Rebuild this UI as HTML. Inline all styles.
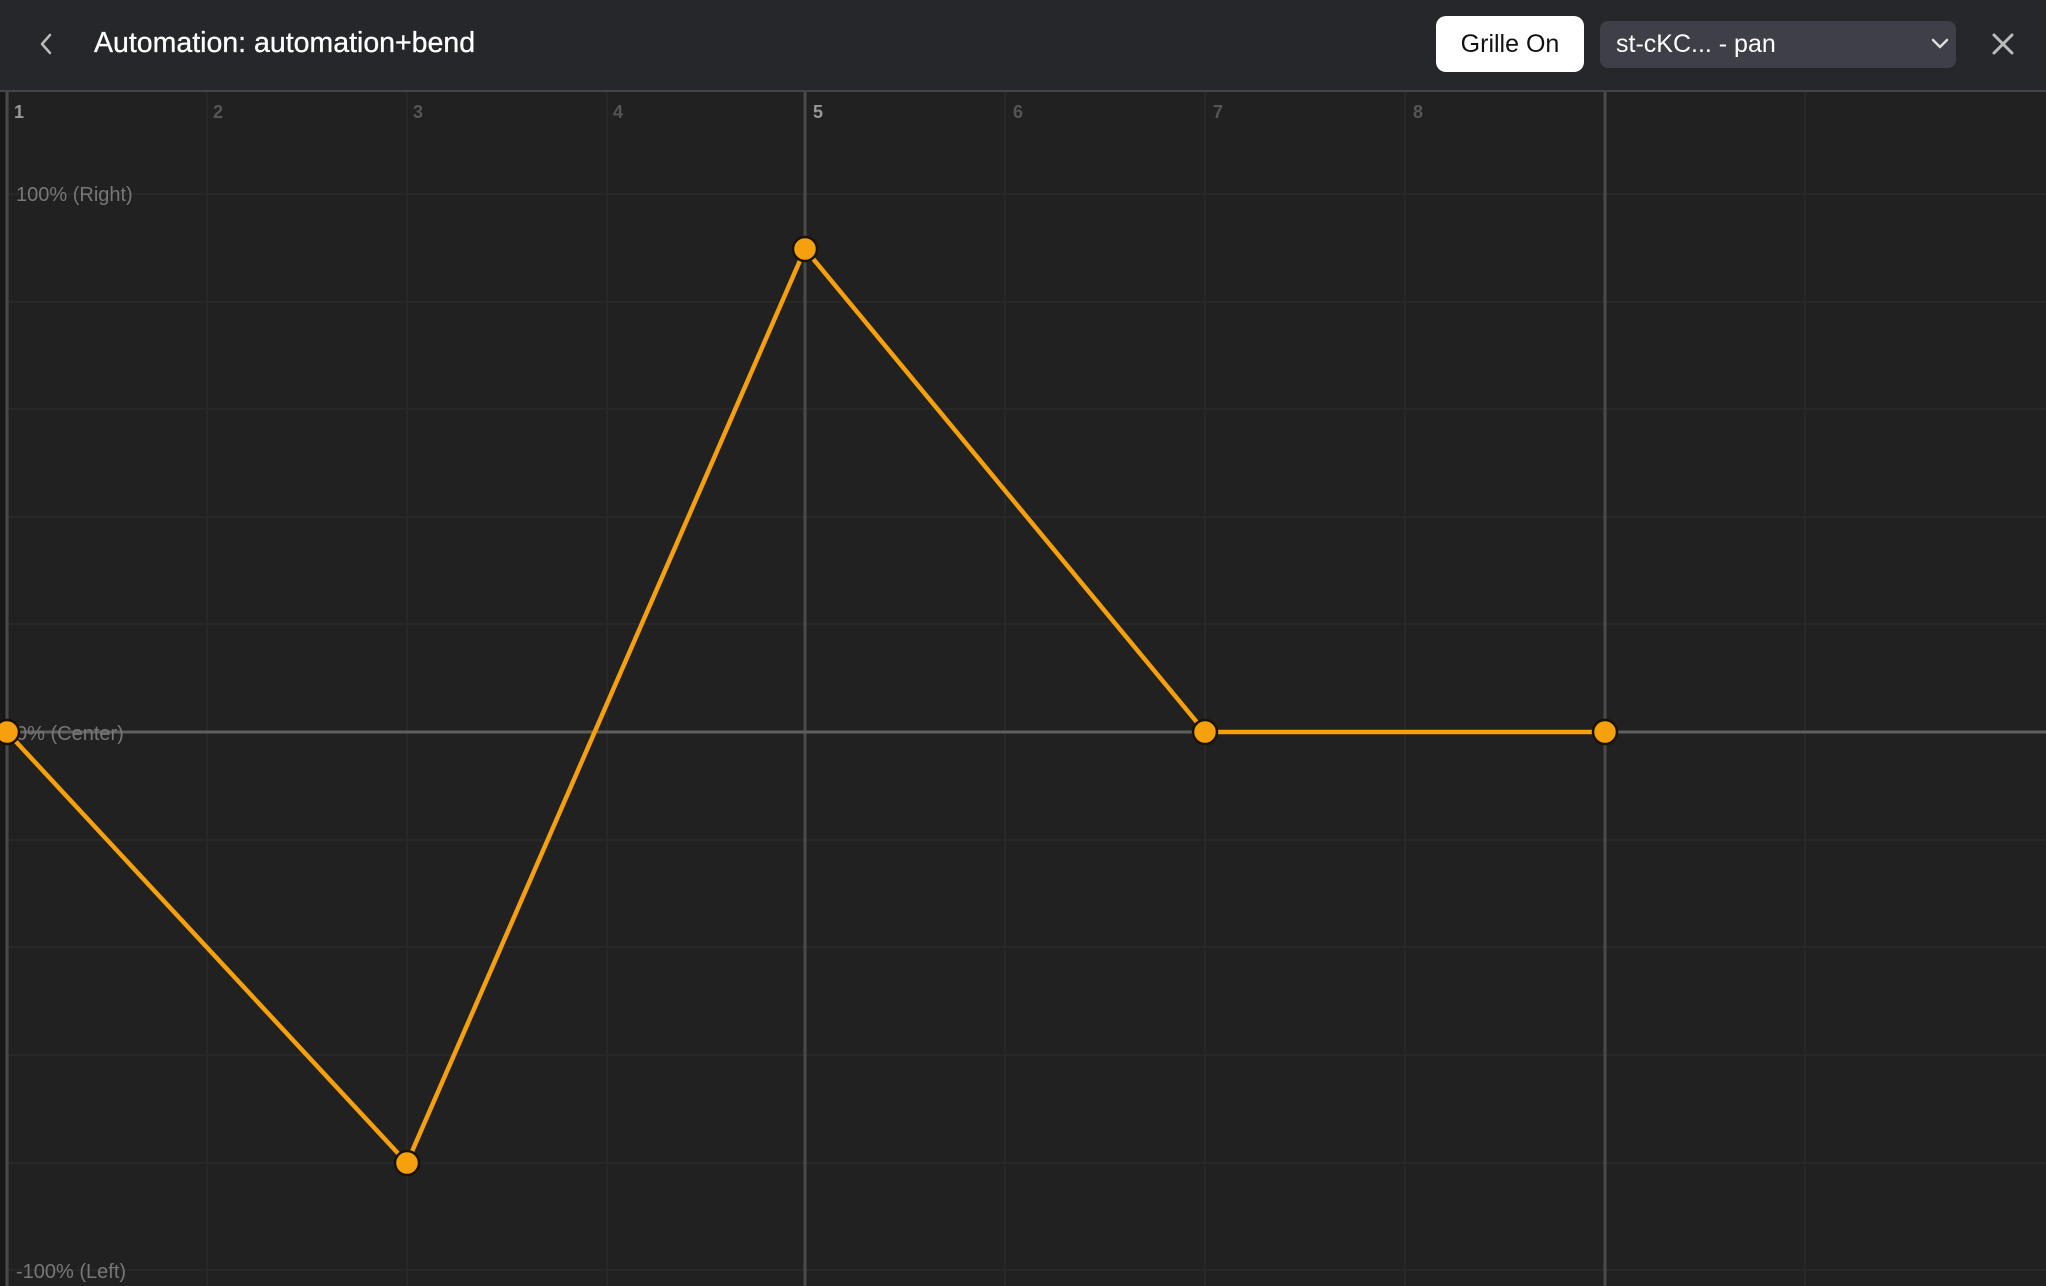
<!DOCTYPE html>
<html><head><meta charset="utf-8"><style>
html,body{margin:0;padding:0;width:2046px;height:1286px;overflow:hidden;background:#212121;font-family:"Liberation Sans",sans-serif}
.hdr{position:absolute;left:0;top:0;width:2046px;height:92px;background:#26272a;border-bottom:2px solid #444;box-sizing:border-box}
.title{position:absolute;left:94px;top:25px;font-size:28.5px;color:#fff;line-height:36px;font-weight:normal;-webkit-text-stroke:0.3px #fff}
.btn{position:absolute;left:1436px;top:16px;width:148px;height:56px;background:#fff;border-radius:10px;color:#111;font-size:25px;line-height:56px;text-align:center}
.sel{position:absolute;left:1600px;top:21px;width:356px;height:47px;background:#3e3f47;border-radius:8px;color:#fff;font-size:25px;line-height:47px;padding-left:16px;box-sizing:border-box}
.icons{position:absolute;left:0;top:0;z-index:5}
</style></head><body>
<svg width="2046" height="1286" style="position:absolute;left:0;top:0" font-family="Liberation Sans, sans-serif">
<rect x="0" y="92" width="6" height="1194" fill="#181818"/>
<g stroke="#282828" stroke-width="2">
<line x1="207" y1="92" x2="207" y2="1286"/><line x1="407" y1="92" x2="407" y2="1286"/><line x1="607" y1="92" x2="607" y2="1286"/>
<line x1="1005" y1="92" x2="1005" y2="1286"/><line x1="1205" y1="92" x2="1205" y2="1286"/><line x1="1405" y1="92" x2="1405" y2="1286"/>
<line x1="1805" y1="92" x2="1805" y2="1286"/>
<line x1="6" y1="194" x2="2046" y2="194"/><line x1="6" y1="302" x2="2046" y2="302"/><line x1="6" y1="409" x2="2046" y2="409"/><line x1="6" y1="517" x2="2046" y2="517"/><line x1="6" y1="624" x2="2046" y2="624"/>
<line x1="6" y1="840" x2="2046" y2="840"/><line x1="6" y1="947" x2="2046" y2="947"/><line x1="6" y1="1055" x2="2046" y2="1055"/><line x1="6" y1="1163" x2="2046" y2="1163"/><line x1="6" y1="1270" x2="2046" y2="1270"/>
</g>
<g stroke="#4a4a4a" stroke-width="3">
<line x1="7" y1="92" x2="7" y2="1286"/><line x1="805" y1="92" x2="805" y2="1286"/><line x1="1605" y1="92" x2="1605" y2="1286"/>
</g>
<line x1="6" y1="732" x2="2046" y2="732" stroke="#5e5e5e" stroke-width="3"/>
<g font-size="18" fill="#555" font-weight="bold">
<text x="14" y="118" fill="#999">1</text><text x="213" y="118">2</text><text x="413" y="118">3</text><text x="613" y="118">4</text>
<text x="813" y="118" fill="#999">5</text><text x="1013" y="118">6</text><text x="1213" y="118">7</text><text x="1413" y="118">8</text>
</g>
<g font-size="20" fill="#777">
<text x="16" y="201">100% (Right)</text><text x="16" y="740">0% (Center)</text><text x="16" y="1278">-100% (Left)</text>
</g>
<polyline points="7,732 407,1163 805,249 1205,732 1605,732" fill="none" stroke="#f5a00c" stroke-width="4.5"/>
<g fill="#f5a00c" stroke="#1a1200" stroke-width="2.5">
<circle cx="7" cy="732" r="12"/><circle cx="407" cy="1163" r="12"/><circle cx="805" cy="249" r="12"/><circle cx="1205" cy="732" r="12"/><circle cx="1605" cy="732" r="12"/>
</g>
</svg>
<div class="hdr"></div>
<div class="title">Automation: automation+bend</div>
<div class="btn">Grille On</div>
<div class="sel">st-cKC... - pan</div>
<svg class="icons" width="2046" height="92">
<path d="M50 35 L42 44 L50 53" fill="none" stroke="#bbb" stroke-width="2.5" stroke-linecap="round" stroke-linejoin="round"/>
<path d="M1933 40 L1940 47 L1947 40" fill="none" stroke="#ddd" stroke-width="2.5" stroke-linecap="round" stroke-linejoin="round"/>
<path d="M1994 35 L2012 53 M2012 35 L1994 53" fill="none" stroke="#bbb" stroke-width="3" stroke-linecap="round"/>
</svg>
</body></html>
